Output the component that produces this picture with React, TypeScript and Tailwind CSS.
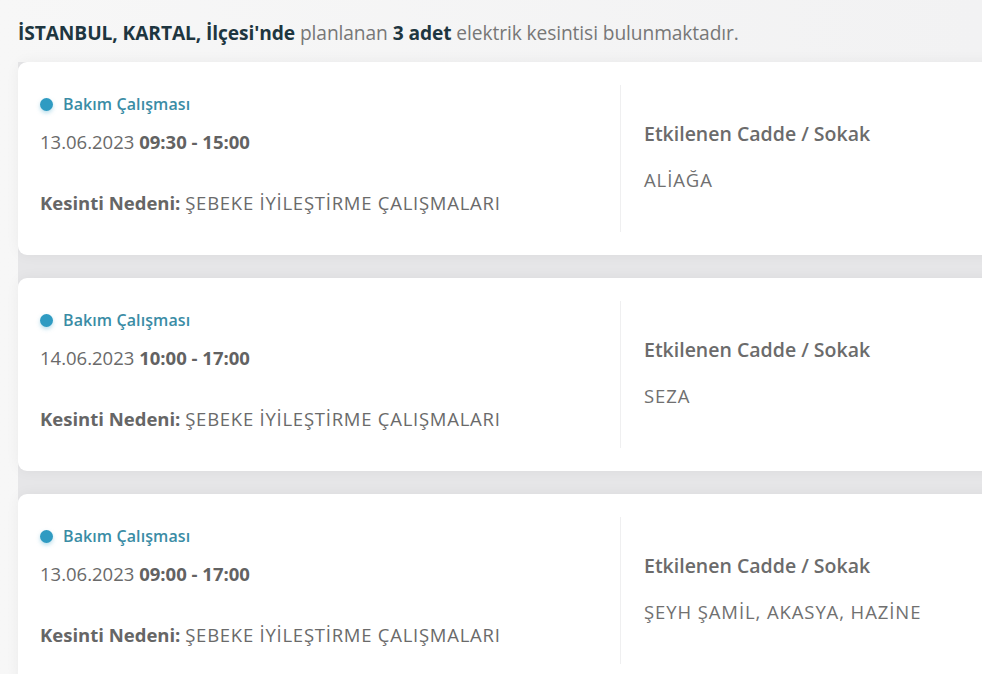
import React from 'react';

type Outage = {
  date: string;
  time: string;
  reason: string;
  streets: string;
};

const outages: Outage[] = [
  { date: '13.06.2023', time: '09:30 - 15:00', reason: 'ŞEBEKE İYİLEŞTİRME ÇALIŞMALARI', streets: 'ALİAĞA' },
  { date: '14.06.2023', time: '10:00 - 17:00', reason: 'ŞEBEKE İYİLEŞTİRME ÇALIŞMALARI', streets: 'SEZA' },
  { date: '13.06.2023', time: '09:00 - 17:00', reason: 'ŞEBEKE İYİLEŞTİRME ÇALIŞMALARI', streets: 'ŞEYH ŞAMİL, AKASYA, HAZİNE' },
];

const OutageCard = ({ item }: { item: Outage }) => (
  <div className="w-[1000px] shrink-0 bg-white rounded-[9px] shadow-[0_0_14px_rgba(0,0,0,0.05)] py-[23px] flex">
    <div className="w-[602px] shrink-0 pl-[22px] pt-[9px]">
      <div className="flex items-center gap-[10px] h-[20px]">
        <span className="w-[13px] h-[13px] rounded-full bg-[#2f9bc2] shadow-[0_2px_4px_rgba(47,155,194,0.35)]" />
        <span className="text-[16px] font-semibold text-[#3a8ca5] tracking-[0.1px]">Bakım Çalışması</span>
      </div>
      <div className="mt-[16px] text-[18.5px] text-[#6a6a6a] leading-[24px]">
        {item.date} <span className="font-bold text-[#626262]">{item.time}</span>
      </div>
      <div className="mt-[37px] text-[18.5px] text-[#6a6a6a] leading-[24px]">
        <span className="font-bold text-[#666]">Kesinti Nedeni:</span>{' '}
        <span className="tracking-[0.75px]">{item.reason}</span>
      </div>
    </div>
    <div className="border-l border-[#efeff0] pl-[23px] pb-[4px] flex flex-col justify-center min-h-[147px]">
      <div className="text-[19.5px] font-semibold text-[#6b6b6b] leading-[26px]">Etkilenen Cadde / Sokak</div>
      <div className="mt-[21px] text-[18.5px] text-[#707070] leading-[24px] tracking-[0.9px]">{item.streets}</div>
    </div>
  </div>
);

export default function App() {
  return (
    <div
      className="w-[982px] h-[674px] overflow-hidden bg-gradient-to-r from-[#f7f7f7] to-[#f2f2f3]"
      style={{ fontFamily: '"Open Sans", "Noto Sans", sans-serif' }}
    >
      <div className="pt-[19px] pl-[18px] h-[62px] text-[19.2px] leading-[28px] tracking-[-0.1px]">
        <span className="font-bold text-[#1e3640]">İSTANBUL, KARTAL, İlçesi'nde</span>{' '}
        <span className="text-[#777]">planlanan</span>{' '}
        <span className="font-bold text-[#1e3640]">3 adet</span>{' '}
        <span className="text-[#777]">elektrik kesintisi bulunmaktadır.</span>
      </div>
      <div className="ml-[18px] bg-[#e6e6e8] flex flex-col gap-[23px]">
        {outages.map((o, i) => (
          <OutageCard key={i} item={o} />
        ))}
      </div>
    </div>
  );
}
